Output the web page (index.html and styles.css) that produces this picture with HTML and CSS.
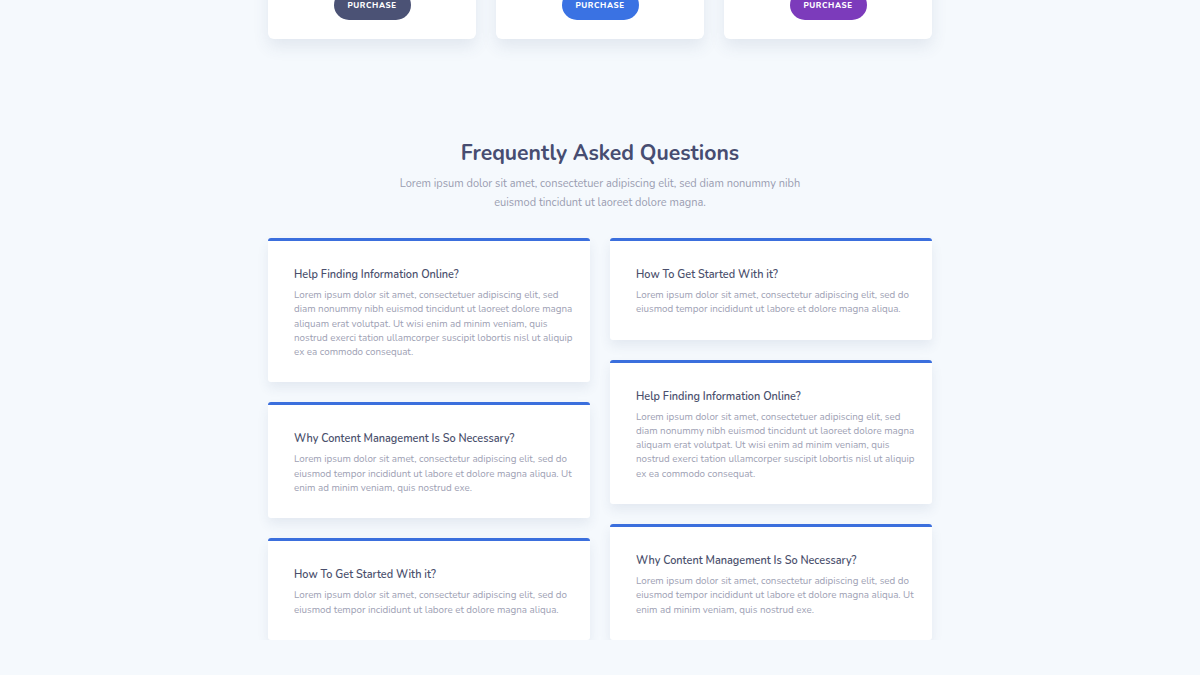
FILE: index.html
```html
<!DOCTYPE html>
<html lang="en">
<head>
<meta charset="utf-8">
<title>FAQ</title>
<link rel="stylesheet" href="styles.css">
</head>
<body>
<section class="pricing">
  <div class="container pricing-row">
    <div class="price-card"><a class="btn btn-dark" href="#">PURCHASE</a></div>
    <div class="price-card"><a class="btn btn-blue" href="#">PURCHASE</a></div>
    <div class="price-card"><a class="btn btn-purple" href="#">PURCHASE</a></div>
  </div>
</section>

<section class="faq">
  <div class="container">
    <h2 class="faq-title">Frequently Asked Questions</h2>
    <p class="faq-sub">Lorem ipsum dolor sit amet, consectetuer adipiscing elit, sed diam nonummy nibh<br>euismod tincidunt ut laoreet dolore magna.</p>
    <div class="faq-grid">
      <div class="faq-col">
        <div class="faq-card">
          <h3>Help Finding Information Online?</h3>
          <p>Lorem ipsum dolor sit amet, consectetuer adipiscing elit, sed diam nonummy nibh euismod tincidunt ut laoreet dolore magna aliquam erat volutpat. Ut wisi enim ad minim veniam, quis nostrud exerci tation ullamcorper suscipit lobortis nisl ut aliquip ex ea commodo consequat.</p>
        </div>
        <div class="faq-card">
          <h3>Why Content Management Is So Necessary?</h3>
          <p>Lorem ipsum dolor sit amet, consectetur adipiscing elit, sed do eiusmod tempor incididunt ut labore et dolore magna aliqua. Ut enim ad minim veniam, quis nostrud exe.</p>
        </div>
        <div class="faq-card">
          <h3>How To Get Started With it?</h3>
          <p>Lorem ipsum dolor sit amet, consectetur adipiscing elit, sed do eiusmod tempor incididunt ut labore et dolore magna aliqua.</p>
        </div>
      </div>
      <div class="faq-col">
        <div class="faq-card">
          <h3>How To Get Started With it?</h3>
          <p>Lorem ipsum dolor sit amet, consectetur adipiscing elit, sed do eiusmod tempor incididunt ut labore et dolore magna aliqua.</p>
        </div>
        <div class="faq-card">
          <h3>Help Finding Information Online?</h3>
          <p>Lorem ipsum dolor sit amet, consectetuer adipiscing elit, sed diam nonummy nibh euismod tincidunt ut laoreet dolore magna aliquam erat volutpat. Ut wisi enim ad minim veniam, quis nostrud exerci tation ullamcorper suscipit lobortis nisl ut aliquip ex ea commodo consequat.</p>
        </div>
        <div class="faq-card">
          <h3>Why Content Management Is So Necessary?</h3>
          <p>Lorem ipsum dolor sit amet, consectetur adipiscing elit, sed do eiusmod tempor incididunt ut labore et dolore magna aliqua. Ut enim ad minim veniam, quis nostrud exe.</p>
        </div>
      </div>
    </div>
  </div>
</section>
</body>
</html>
```

FILE: styles.css
```css
* { box-sizing: border-box; }
html, body {
  margin: 0;
  padding: 0;
  background: #f5f9fd;
  font-family: "Nunito", Lato, "Noto Sans", sans-serif;
  overflow: hidden;
}
.container {
  width: 664px;
  margin: 0 auto;
}
.pricing-row {
  display: flex;
  gap: 20px;
  margin-top: -60px;
}
.price-card {
  flex: 1;
  background: #fff;
  border-radius: 6px;
  box-shadow: 0 8px 16px rgba(60, 80, 120, 0.10);
  padding: 50px 0 19px;
  display: flex;
  justify-content: center;
}
.btn {
  display: inline-flex;
  align-items: center;
  justify-content: center;
  width: 77px;
  height: 30px;
  border-radius: 15px;
  color: #fff;
  text-decoration: none;
  font-size: 8px;
  font-weight: 800;
  letter-spacing: 0.6px;
}
.btn-dark { background: #4b5275; }
.btn-blue { background: #3a72e3; }
.btn-purple { background: #7c3bbb; }

.faq {
  padding-top: 99px;
}
.faq-title {
  margin: 0;
  text-align: center;
  font-size: 21.2px;
  font-weight: 700;
  color: #474d71;
  line-height: 30px;
}
.faq-sub {
  margin: 6px 0 0;
  text-align: center;
  font-size: 11px;
  line-height: 19px;
  color: #9a9db1;
}
.faq-grid {
  margin-top: 26px;
  display: flex;
  gap: 20px;
  align-items: flex-start;
}
.faq-col {
  flex: 1;
  display: flex;
  flex-direction: column;
  gap: 20px;
}
.faq-card {
  background: #fff;
  border-top: 3px solid #3b6fdd;
  border-radius: 3px;
  box-shadow: 0 6px 12px rgba(60, 80, 120, 0.09);
  padding: 26px 14px 23px 26px;
}
.faq-card h3 {
  margin: 0;
  font-size: 10.9px;
  font-weight: 600;
  color: #4a4f6c;
  line-height: 16px;
}
.faq-card p {
  margin: 5px 0 0;
  font-size: 9.8px;
  line-height: 14.3px;
  color: #9ea1b4;
}
```
